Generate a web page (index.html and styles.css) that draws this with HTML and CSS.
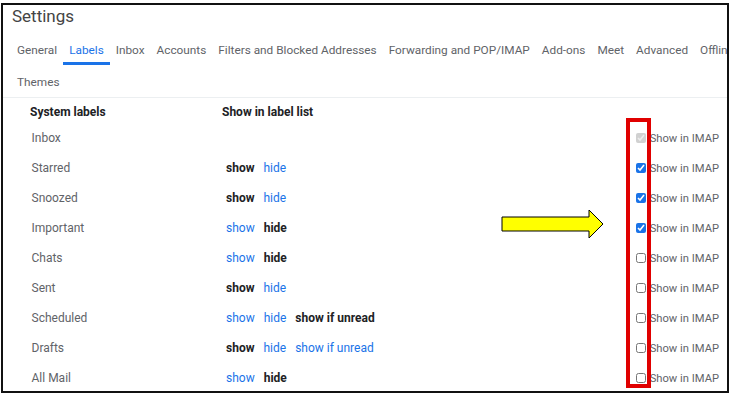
FILE: index.html
```html
<!DOCTYPE html>
<html lang="en">
<head>
    <meta charset="UTF-8">
    <title>Settings - Labels</title>
    <link rel="stylesheet" href="styles.css">
</head>
<body>
    <div class="frame">
        <h1 class="title">Settings</h1>

        <nav class="tabs">
            <a class="tab">General</a>
            <a class="tab active">Labels</a>
            <a class="tab">Inbox</a>
            <a class="tab">Accounts</a>
            <a class="tab">Filters and Blocked Addresses</a>
            <a class="tab">Forwarding and POP/IMAP</a>
            <a class="tab">Add-ons</a>
            <a class="tab">Meet</a>
            <a class="tab">Advanced</a>
            <a class="tab">Offline</a>
        </nav>
        <nav class="tabs">
            <a class="tab">Themes</a>
        </nav>

        <div class="labels">
            <div class="label-row header">
                <div class="name">System labels</div>
                <div class="actions">Show in label list</div>
                <div class="imap"></div>
            </div>

            <div class="label-row">
                <div class="name">Inbox</div>
                <div class="actions"></div>
                <label class="imap"><input type="checkbox" checked disabled>Show in IMAP</label>
            </div>
            <div class="label-row">
                <div class="name">Starred</div>
                <div class="actions"><b>show</b><a>hide</a></div>
                <label class="imap"><input type="checkbox" checked>Show in IMAP</label>
            </div>
            <div class="label-row">
                <div class="name">Snoozed</div>
                <div class="actions"><b>show</b><a>hide</a></div>
                <label class="imap"><input type="checkbox" checked>Show in IMAP</label>
            </div>
            <div class="label-row">
                <div class="name">Important</div>
                <div class="actions"><a>show</a><b>hide</b></div>
                <label class="imap"><input type="checkbox" checked>Show in IMAP</label>
            </div>
            <div class="label-row">
                <div class="name">Chats</div>
                <div class="actions"><a>show</a><b>hide</b></div>
                <label class="imap"><input type="checkbox">Show in IMAP</label>
            </div>
            <div class="label-row">
                <div class="name">Sent</div>
                <div class="actions"><b>show</b><a>hide</a></div>
                <label class="imap"><input type="checkbox">Show in IMAP</label>
            </div>
            <div class="label-row">
                <div class="name">Scheduled</div>
                <div class="actions"><a>show</a><a>hide</a><b>show if unread</b></div>
                <label class="imap"><input type="checkbox">Show in IMAP</label>
            </div>
            <div class="label-row">
                <div class="name">Drafts</div>
                <div class="actions"><b>show</b><a>hide</a><a>show if unread</a></div>
                <label class="imap"><input type="checkbox">Show in IMAP</label>
            </div>
            <div class="label-row">
                <div class="name">All Mail</div>
                <div class="actions"><a>show</a><b>hide</b></div>
                <label class="imap"><input type="checkbox">Show in IMAP</label>
            </div>
        </div>

        <!-- annotations drawn on top of the screenshot -->
        <svg class="arrow" width="104" height="30" viewBox="0 0 104 30">
            <polygon points="1,8 88,8 88,1 102,15 88,29 88,22 1,22" fill="#ffff00" stroke="#000" stroke-width="1"></polygon>
        </svg>
        <div class="highlight"></div>
    </div>
</body>
</html>
```

FILE: styles.css
```css
:root {
    --text-color: #5f6368;
    --text-strong: #202124;
    --link-color: #1a73e8;
    --line-color: #eceff1;
}

* {
    box-sizing: border-box;
    margin: 0;
    padding: 0;
}

body {
    font-family: Roboto, "Liberation Sans", Arial, sans-serif;
    background-color: #ffffff;
    color: var(--text-color);
}

.frame {
    position: relative;
    width: 728px;
    height: 390px;
    margin: 3px 0 0 1px;
    border: 2px solid #111;
    overflow: hidden;
}

.title {
    font-size: 17px;
    font-weight: 400;
    line-height: 22px;
    color: #444;
    padding: 0 0 6px 9px;
}

/* the tab strip runs past the right edge, as in the screenshot */
.tabs {
    display: flex;
    flex-wrap: nowrap;
    white-space: nowrap;
    padding-left: 8px;
}

.tab {
    font-size: 11.8px;
    height: 32px;
    line-height: 29px;
    padding: 3px 6px 0;
    color: #5f6368;
    border-bottom: 3px solid transparent;
}

.tab.active {
    color: var(--link-color);
    border-bottom-color: var(--link-color);
}

.labels {
    border-top: 1px solid var(--line-color);
}

.label-row {
    display: grid;
    grid-template-columns: 192px 1fr auto;
    align-items: center;
    height: 30px;
    padding-left: 27px;
    font-size: 12px;
}

.label-row.header {
    height: 25px;
    padding-top: 3px;
    font-weight: 700;
    color: var(--text-strong);
}

.label-row .name {
    padding-left: 1.5px;
}

.label-row.header .name {
    padding-left: 0;
}

.actions {
    display: flex;
    gap: 9px;
    padding-left: 4px;
}

.header .actions {
    padding-left: 0;
}

.actions b {
    color: var(--text-strong);
}

.actions a {
    color: var(--link-color);
}

.imap {
    display: flex;
    align-items: center;
    font-size: 11.2px;
    color: #5f6368;
    padding-right: 8px;
}

.imap input {
    width: 10px;
    height: 10px;
    margin: 0 4px 0 0;
    accent-color: var(--link-color);
}

.arrow {
    position: absolute;
    left: 498px;
    top: 204px;
}

.highlight {
    position: absolute;
    left: 623px;
    top: 113px;
    width: 25px;
    height: 270px;
    border: 4px solid #e00000;
}
```
